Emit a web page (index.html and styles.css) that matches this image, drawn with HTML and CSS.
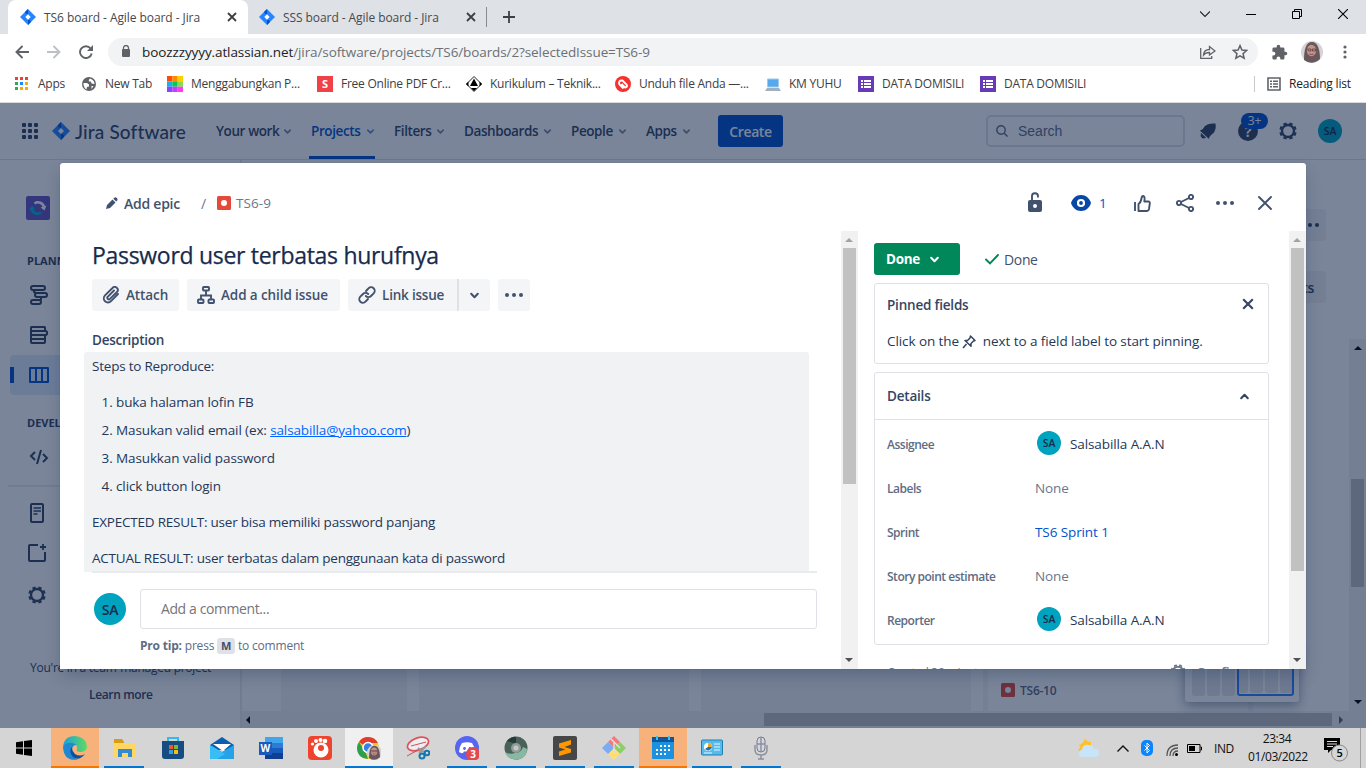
FILE: index.html
```html
<!DOCTYPE html>
<html lang="en">
<head>
<meta charset="utf-8">
<title>TS6 board - Agile board - Jira</title>
<link rel="stylesheet" href="styles.css">
</head>
<body>
<svg class="defs" width="0" height="0">
  <defs>
    <symbol id="jira" viewBox="0 0 16 16"><path fill="#2684ff" d="M8 0l8 8-8 8-8-8z"/><path fill="#0052cc" d="M8 0L5.2 2.8Q5 5 8 5.3zM8 16l2.8-2.8Q11 11 8 10.7z"/><path fill="#fff" d="M8 5.3L10.7 8 8 10.7 5.3 8z"/></symbol>
    <symbol id="close" viewBox="0 0 10 10"><path d="M1 1l8 8M9 1l-8 8" fill="none" stroke="currentColor" stroke-width="1.8"/></symbol>
    <symbol id="chev" viewBox="0 0 10 10"><path d="M2 3.5l3 3 3-3" fill="none" stroke="currentColor" stroke-width="1.9" stroke-linecap="round" stroke-linejoin="round"/></symbol>
    <symbol id="dots" viewBox="0 0 18 6"><circle cx="2" cy="3" r="2"/><circle cx="9" cy="3" r="2"/><circle cx="16" cy="3" r="2"/></symbol>
    <symbol id="gear" viewBox="0 0 18 18"><circle cx="9" cy="9" r="6" fill="none" stroke="currentColor" stroke-width="2.3"/><path stroke="currentColor" stroke-width="3.4" d="M6.4 2.8L5.7 1M11.600 2.800l.7-1.800M15.200 6.400l1.800-.7M15.200 11.600l1.800.7M11.600 15.200l.7 1.800M6.400 15.200l-.7 1.800M2.800 11.600L1 12.300M2.800 6.400L1 5.700"/></symbol>
    <symbol id="bug" viewBox="0 0 14 14"><rect width="14" height="14" rx="1.5" fill="#e5493a"/><circle cx="7" cy="7" r="3" fill="#fff"/></symbol>
    <symbol id="form" viewBox="0 0 16 16"><path fill="#673ab7" d="M0 0h16v16H0z"/><path fill="#fff" d="M3 4h2v2H3zM6 4h7v2H6zM3 7h2v2H3zM6 7h7v2H6zM3 10h2v2H3zM6 10h7v2H6z"/></symbol>
    <symbol id="face" viewBox="0 0 22 22"><circle cx="11" cy="11" r="11" fill="#d8d2d6"/><path fill="#66595c" d="M3 19C3 8 5 1 11 1s8 8 8 17q-8 7-16 1z"/><ellipse cx="10.5" cy="9.5" rx="4.6" ry="5.8" fill="#c4948b"/><path d="M6.500 8h3.500v2H7.500zM11.500 8h3v2h-3z" fill="none" stroke="#4a3038" stroke-width=".7"/><path d="M8.500 13q2 1 4 0" stroke="#a5324a" fill="none"/></symbol>
    <symbol id="up" viewBox="0 0 8 4"><path d="M0 4l4-4 4 4z"/></symbol>
    <symbol id="down" viewBox="0 0 8 4"><path d="M0 0l4 4 4-4z"/></symbol>
  </defs>
</svg>

<header class="tabs">
  <div class="tab active"><svg class="i16"><use href="#jira"/></svg><span>TS6 board - Agile board - Jira</span><svg class="x"><use href="#close"/></svg></div>
  <div class="tab second"><svg class="i16"><use href="#jira"/></svg><span>SSS board - Agile board - Jira</span><svg class="x"><use href="#close"/></svg></div>
  <svg class="newtab" viewBox="0 0 12 12"><path d="M6 0v12M0 6h12" stroke="#3c4043" stroke-width="1.8"/></svg>
  <div class="winctl">
    <svg viewBox="0 0 10 10"><path d="M0 2.500l5 5 5-5" fill="none" stroke="#222" stroke-width="1.100"/></svg>
    <svg viewBox="0 0 10 10"><path d="M0 5.500h10" stroke="#000"/></svg>
    <svg viewBox="0 0 10 10"><path d="M.5 2.500h7v7h-7zM2.500 2.500v-2h7v7h-2" fill="none" stroke="#000"/></svg>
    <svg viewBox="0 0 10 10"><path d="M0 0l10 10M10 0L0 10" stroke="#000" stroke-width="1.100"/></svg>
  </div>
</header>

<div class="toolbar">
  <svg class="nav" viewBox="0 0 14 14"><path d="M14 7H1.500M7.500 1l-6 6 6 6" fill="none" stroke="#5f6368" stroke-width="1.900"/></svg>
  <svg class="nav" viewBox="0 0 14 14"><path d="M0 7h12.500M6.500 1l6 6-6 6" fill="none" stroke="#bdc1c6" stroke-width="1.900"/></svg>
  <svg class="nav" viewBox="0 0 14 14"><path d="M11.600 3.500A5.900 5.900 0 1 0 12.700 8.500" fill="none" stroke="#5f6368" stroke-width="1.900"/><path d="M14 0v6H8z" fill="#5f6368"/></svg>
  <div class="omni">
    <svg class="lock" viewBox="0 0 10 12"><rect x="1" y="4" width="8" height="8" rx="1" fill="#5f6368"/><path d="M2.500 5V3a2.500 2.500 0 0 1 5 0v2" fill="none" stroke="#5f6368" stroke-width="1.300"/></svg>
    <span class="url"><b>boozzzyyyy.atlassian.net</b>/jira/software/projects/TS6/boards/2?selectedIssue=TS6-9</span>
    <svg class="share" viewBox="0 0 16 14"><path d="M.7 3v10.300h11V11M3.500 10c.3-4 3-5.500 6-5.500V1.500L15 6l-5.500 4V7.500C6.500 7.500 5 8 3.500 10z" fill="none" stroke="#5f6368" stroke-width="1.300"/></svg>
    <svg class="star" viewBox="0 0 24 24"><path d="M12 2.500l2.900 6.600 7.100.6-5.400 4.700 1.600 7L12 17.700l-6.200 3.700 1.600-7L2 9.700l7.100-.6z" fill="none" stroke="#5f6368" stroke-width="2.300"/></svg>
  </div>
  <svg class="puzzle" viewBox="0 0 24 24"><path fill="#5f6368" d="M20.500 11H19V7a2 2 0 0 0-2-2h-4V3.500a2.500 2.500 0 0 0-5 0V5H4a2 2 0 0 0-2 2v3.800h1.500a2.700 2.700 0 0 1 0 5.400H2V20a2 2 0 0 0 2 2h3.800v-1.500a2.700 2.700 0 0 1 5.400 0V22H17a2 2 0 0 0 2-2v-4h1.500a2.500 2.500 0 0 0 0-5z"/></svg>
  <svg class="face"><use href="#face"/></svg>
  <svg class="kebab" viewBox="0 0 4 14"><g fill="#5f6368"><circle cx="2" cy="2" r="1.600"/><circle cx="2" cy="7" r="1.600"/><circle cx="2" cy="12" r="1.600"/></g></svg>
</div>

<nav class="bookmarks">
  <div class="bm"><svg class="i13" viewBox="0 0 13 13"><path fill="#ea4335" d="M0 0h3v3H0zM5 0h3v3H5zM10 0h3v3h-3z"/><path fill="#34a853" d="M0 5h3v3H0zM0 10h3v3H0z"/><path fill="#1a8cff" d="M5 5h3v3H5z"/><path fill="#f9ab00" d="M10 5h3v3h-3zM5 10h3v3H5zM10 10h3v3h-3z"/></svg><span>Apps</span></div>
  <div class="bm"><svg class="i14" viewBox="0 0 14 14"><circle cx="7" cy="7" r="7" fill="#5f6368"/><path fill="#fff" d="M1.500 6l3.500 0 2 1.500 0 2-2 .5-.5 2.500Q2 11 1.500 8zM8 1.500Q6 3 7 4.500l2 0 .5 2 3 .5Q12.500 3 8 1.500zM9.500 9h2l-2 3z"/></svg><span>New Tab</span></div>
  <div class="bm"><svg class="i16" viewBox="0 0 16 16"><path fill="#ff4b0a" d="M0 0h5.300v5.300H0z"/><path fill="#ff8a00" d="M5.300 0h5.400v5.300H5.300z"/><path fill="#ffce00" d="M10.700 0H16v5.300h-5.300z"/><path fill="#14b0e8" d="M0 5.300h5.300v5.400H0z"/><path fill="#00c864" d="M5.300 5.300h5.400v5.400H5.300z"/><path fill="#81df49" d="M10.700 5.300H16v5.400h-5.300z"/><path fill="#8746ff" d="M0 10.700h5.300V16H0z"/><path fill="#c43cff" d="M5.300 10.700h5.400V16H5.300z"/><path fill="#ff3af3" d="M10.700 10.700H16V16h-5.300z"/></svg><span>Menggabungkan P...</span></div>
  <div class="bm"><b class="s-logo">S</b><span>Free Online PDF Cr...</span></div>
  <div class="bm"><svg class="i16" viewBox="0 0 16 16"><path d="M8 .5L15.500 8 8 15.500.5 8z" fill="#fff" stroke="#222"/><path d="M8 2.500l4 7.500H4zM0 8l2.500-2.500v5zM16 8l-2.500-2.500v5zM5 12h6l-3 3z"/></svg><span>Kurikulum – Teknik...</span></div>
  <div class="bm"><svg class="i16" viewBox="0 0 16 16"><circle cx="8" cy="8" r="8" fill="#f5302d"/><path d="M8.500 12.500L4.500 8.500Q3 5.500 6 4.500h1.500l4 4Q13 11 10 11.500L6.500 8" fill="none" stroke="#fff" stroke-width="1.900"/></svg><span>Unduh file Anda —...</span></div>
  <div class="bm"><svg class="i16" viewBox="0 0 16 16"><path fill="#56a9ec" stroke="#9dc9ee" d="M2.500 3h11v8h-11z"/><path fill="#9eb1c1" d="M2 12h12l2 3H0z"/></svg><span>KM YUHU</span></div>
  <div class="bm"><svg class="i16"><use href="#form"/></svg><span>DATA DOMISILI</span></div>
  <div class="bm"><svg class="i16"><use href="#form"/></svg><span>DATA DOMISILI</span></div>
  <div class="bm reading"><svg class="i14" viewBox="0 0 14 14"><path d="M1 1h12v12H1z" fill="none" stroke="#5f6368" stroke-width="1.600"/><path fill="#5f6368" d="M3 3.500h2v1.500H3zM6 3.500h5v1.500H6zM3 6.300h2v1.500H3zM6 6.300h5v1.500H6zM3 9h2v1.500H3zM6 9h5v1.500H6z"/></svg><span>Reading list</span></div>
</nav>

<main class="page">
  <div class="app">
    <div class="jbar">
      <svg class="grid" viewBox="0 0 16 16"><g fill="#344563"><rect width="4" height="4" rx="1"/><rect x="6" width="4" height="4" rx="1"/><rect x="12" width="4" height="4" rx="1"/><rect y="6" width="4" height="4" rx="1"/><rect x="6" y="6" width="4" height="4" rx="1"/><rect x="12" y="6" width="4" height="4" rx="1"/><rect y="12" width="4" height="4" rx="1"/><rect x="6" y="12" width="4" height="4" rx="1"/><rect x="12" y="12" width="4" height="4" rx="1"/></g></svg>
      <svg class="jlogo"><use href="#jira"/></svg><span class="brand">Jira Software</span>
      <div class="menu">
        <div><span>Your work</span><svg><use href="#chev"/></svg></div>
        <div class="on"><span>Projects</span><svg><use href="#chev"/></svg></div>
        <div><span>Filters</span><svg><use href="#chev"/></svg></div>
        <div><span>Dashboards</span><svg><use href="#chev"/></svg></div>
        <div><span>People</span><svg><use href="#chev"/></svg></div>
        <div><span>Apps</span><svg><use href="#chev"/></svg></div>
      </div>
      <button class="create">Create</button>
      <div class="search"><svg viewBox="0 0 12 12"><circle cx="5" cy="5" r="4.200" fill="none" stroke="#5e6c84" stroke-width="1.400"/><path d="M8 8l3.500 3.500" stroke="#5e6c84" stroke-width="1.400"/></svg><span>Search</span></div>
      <svg class="bell" viewBox="0 0 18 18"><path fill="#344563" d="M16.500 1.500Q9 .8 5.500 4.500 4 8 .8 8.500L10 17q0-3 4-5.500Q17.500 8 16.500 1.500zM2 11l5 4.600Q4 17.500 2.500 15.500 1 14 2 11z"/></svg>
      <div class="help"><span>?</span><em>3+</em></div>
      <svg class="jgear"><use href="#gear"/></svg>
      <span class="ava a24">SA</span>
    </div>
    <div class="work">
      <aside class="side">
        <svg class="proj" viewBox="0 0 24 24"><rect width="24" height="24" rx="2" fill="#6554c0"/><path d="M5.500 12.500a6 6 0 0 0 9.500 4" fill="none" stroke="#00b8d9" stroke-width="2.600"/><path d="M3 14l3-4 3.500 3.500z" fill="#00b8d9"/><path d="M8.500 7.500a6 6 0 0 1 9.500 4" fill="none" stroke="#fff" stroke-width="2.600"/><path d="M20.500 9.500l-2 5-4-3z" fill="#fff"/></svg>
        <h4>PLANNING</h4>
        <div class="si"><svg viewBox="0 0 20 20"><g fill="none" stroke="#344563" stroke-width="2"><rect x="2" y="1" width="14" height="4" rx="2"/><rect x="6" y="8" width="12" height="4" rx="2"/><rect x="2" y="15" width="10" height="4" rx="2"/><path d="M5 5v2l2 1M12 12v3"/></g></svg></div>
        <div class="si"><svg viewBox="0 0 20 20"><g fill="none" stroke="#344563" stroke-width="2"><path d="M16 6V2.500Q16 2 15.500 2h-13Q2 2 2 2.500V17q0 1 1 1h12q1 0 1-1v-7M2 6h15l1 1v2l-1 1H2M2 14h14"/></g></svg></div>
        <div class="si sel"><svg viewBox="0 0 20 20"><path d="M1 3h18v14H1zM7 3v14M13 3v14" fill="none" stroke="#0052cc" stroke-width="2" stroke-linejoin="round"/></svg></div>
        <h4 class="dev">DEVELOPMENT</h4>
        <div class="si code"><svg viewBox="0 0 20 20"><path d="M6 5L2 9l4 4M14 7l4 4-4 4M12 3L8 17" fill="none" stroke="#344563" stroke-width="2"/></svg></div>
        <hr>
        <div class="si low"><svg viewBox="0 0 20 20"><rect x="4" y="1" width="12" height="18" rx="1" fill="none" stroke="#344563" stroke-width="2"/><path d="M6.500 5h7.500M6.500 8h7.500M6.500 11h4" stroke="#344563" stroke-width="1.600"/></svg></div>
        <div class="si low"><svg viewBox="0 0 20 20"><path d="M11 2H3Q2 2 2 3v14q0 1 1 1h14q1 0 1-1V9" fill="none" stroke="#344563" stroke-width="2"/><path d="M16 1v6M13 4h6" stroke="#344563" stroke-width="1.800"/></svg></div>
        <div class="si low"><svg><use href="#gear"/></svg></div>
        <p class="tm">You're in a team-managed project</p>
        <p class="lm">Learn more</p>
      </aside>
      <section class="board">
        <div class="bbody">
          <div class="btns"><span><svg><use href="#dots"/></svg></span><span>Insights</span></div>
          <div class="cols"><i></i><i></i><i></i><i><u><svg><use href="#bug"/></svg>TS6-10</u></i></div>
          <div class="mini"><i></i><i></i><i></i><b><i></i><i></i><i></i><i></i></b></div>
          <div class="vbar"><svg><use href="#up"/></svg><i></i><svg><use href="#down"/></svg></div>
        </div>
        <div class="hbar"><svg viewBox="0 0 4 8"><path d="M4 0v8L0 4z"/></svg><i></i><svg class="dim" viewBox="0 0 4 8"><path d="M0 0v8l4-4z"/></svg></div>
      </section>
    </div>
  </div>
  <div class="blanket"></div>

  <div class="modal">
    <div class="mhead">
      <svg class="pencil" viewBox="0 0 12 12"><path d="M0 12l1-4 5.500-5.500 3 3L4 11zM7.300 1.700l1-1q1.200-1 2.500.3t.4 2.600l-1 1z"/></svg>
      <b class="epic">Add epic</b><span class="slash">/</span>
      <svg class="bug"><use href="#bug"/></svg><span class="key">TS6-9</span>
      <div class="acts">
        <svg class="a1" viewBox="0 0 14 20"><rect y="8" width="14" height="12" rx="2"/><circle cx="7" cy="14" r="2" fill="#fff"/><path d="M4 9V4.500a3 3 0 0 1 6-.5v1.500" fill="none" stroke="#42526e" stroke-width="1.900"/></svg>
        <svg class="a2" viewBox="0 0 20 16"><path d="M10 0c5 0 8.500 3.500 10 8-1.500 4.500-5 8-10 8S1.500 12.500 0 8C1.500 3.500 5 0 10 0z" fill="#0747a6"/><circle cx="10" cy="8" r="3" fill="none" stroke="#fff" stroke-width="2.200"/></svg>
        <span class="one">1</span>
        <svg class="a3" viewBox="0 0 17 17"><path d="M1 7v9M4.500 16V9c2-1 2.500-3 3-5.500C7.700 1 8.500 1 9.300 1c2 .5 1.500 3 1 5.500h4q1.700 0 1.500 2l-.8 5.500q-.4 2-2 2z" fill="none" stroke="#42526e" stroke-width="1.900" stroke-linejoin="round"/></svg>
        <svg class="a4" viewBox="0 0 18 18"><g fill="none" stroke="#42526e" stroke-width="1.900"><circle cx="3" cy="9" r="2.100"/><circle cx="15" cy="3" r="2.100"/><circle cx="15" cy="15" r="2.100"/><path d="M5 8l8-4M5 10l8 4"/></g></svg>
        <svg class="a5"><use href="#dots"/></svg>
        <svg class="a6" viewBox="0 0 14 14"><path d="M1 1l12 12M13 1L1 13" stroke="#42526e" stroke-width="1.900" stroke-linecap="round"/></svg>
      </div>
    </div>
    <div class="mbody">
      <section class="left">
        <div class="lmain">
          <h1>Password user terbatas hurufnya</h1>
          <div class="btnrow">
            <button class="b1"><svg viewBox="0 0 18 18"><path d="M16 8l-7 7.200a4 4 0 0 1-6-5.800L10.500 2a3 3 0 0 1 4.500 4L8 12.800a1.500 1.500 0 0 1-2.300-2L12 4.500" fill="none" stroke="#42526e" stroke-width="1.900" stroke-linecap="round"/></svg><span>Attach</span></button>
            <button class="b2"><svg viewBox="0 0 18 18"><g fill="none" stroke="#42526e" stroke-width="1.900"><rect x="6" y="1" width="6" height="3.500" rx=".8"/><rect x="1" y="13.500" width="5.500" height="3.500" rx=".8"/><rect x="11.500" y="13.500" width="5.500" height="3.500" rx=".8"/><path d="M9 5v4M4 13V9.500h10V13"/></g></svg><span>Add a child issue</span></button>
            <div class="split"><button class="b3"><svg viewBox="0 0 18 18"><path d="M8 5l2.500-2.700a3.500 3.500 0 0 1 5.200 5L13 10a3.500 3.500 0 0 1-5.200 0M10 13l-2.500 2.700a3.500 3.500 0 0 1-5.200-5L5 8a3.500 3.500 0 0 1 5.200 0" fill="none" stroke="#42526e" stroke-width="1.900" stroke-linecap="round"/></svg><span>Link issue</span></button><button class="sq"><svg class="c"><use href="#chev"/></svg></button></div>
            <button class="sq"><svg class="d"><use href="#dots"/></svg></button>
          </div>
          <h3>Description</h3>
          <div class="desc">
            <p>Steps to Reproduce:</p>
            <ol><li>buka halaman lofin FB</li><li>Masukan valid email (ex: <a>salsabilla@yahoo.com</a>)</li><li>Masukkan valid password</li><li>click button login</li></ol>
            <p>EXPECTED RESULT: user bisa memiliki password panjang</p>
            <p class="last">ACTUAL RESULT: user terbatas dalam penggunaan kata di password</p>
          </div>
          <div class="comment"><span class="ava a32">SA</span><div class="field">Add a comment...</div></div>
          <p class="tip"><b>Pro tip:</b> press <kbd>M</kbd> to comment</p>
        </div>
        <div class="sb"><svg class="u"><use href="#up"/></svg><i></i><svg><use href="#down"/></svg></div>
      </section>
      <section class="right">
        <div class="rmain">
          <div class="status"><button>Done<svg><use href="#chev"/></svg></button><svg class="ck" viewBox="0 0 14 11"><path d="M1 5.500L5 9.500 13 1" fill="none" stroke="#00875a" stroke-width="1.900" stroke-linecap="round"/></svg><span>Done</span></div>
          <div class="card pinned"><div class="ph"><span>Pinned fields</span><svg><use href="#close"/></svg></div>
            <p>Click on the <svg viewBox="0 0 14 14"><path d="M8.500 1l4.500 4.500-1.500.5L9 8.500v2.800L3 5.500h2.500L8 3zM4.500 9L1 13" fill="none" stroke="#344563" stroke-width="1.500" stroke-linejoin="round"/></svg> next to a field label to start pinning.</p></div>
          <div class="card details"><div class="dh"><span>Details</span><svg><use href="#chev"/></svg></div>
            <dl>
              <dt>Assignee</dt><dd class="who"><span class="ava a24">SA</span><span>Salsabilla A.A.N</span></dd>
              <dt>Labels</dt><dd class="none">None</dd>
              <dt>Sprint</dt><dd class="link">TS6 Sprint 1</dd>
              <dt>Story point estimate</dt><dd class="none">None</dd>
              <dt>Reporter</dt><dd class="who"><span class="ava a24">SA</span><span>Salsabilla A.A.N</span></dd>
            </dl></div>
          <div class="foot"><span class="cr">Created 36 minutes ago</span><svg><use href="#gear"/></svg><b>Configure</b></div>
        </div>
        <div class="sb long"><svg class="u"><use href="#up"/></svg><i></i><svg><use href="#down"/></svg></div>
      </section>
    </div>
  </div>
</main>

<footer class="taskbar">
  <div class="start"><svg viewBox="0 0 16 16"><path d="M0 2.200l7-1V7.600H0zM8 1.100L16 0v7.600H8zM0 8.400h7v6.400l-7-1zM8 8.400h8V16l-8-1.100z"/></svg></div>
  <div class="t hot"><svg viewBox="0 0 24 24"><defs><linearGradient id="eg" x1="0" x2="1"><stop stop-color="#1ba0dd"/><stop offset="1" stop-color="#5edb60"/></linearGradient></defs><path fill="url(#eg)" d="M0 11Q1 0 12 0q11 1 12 10 0 6-7 6-4 0-3-3 1-2-1-4Q6 6 0 11z"/><path fill="#1e88d2" d="M0 11q3-5 9-4 4 1 4.500 2-5 0-4.500 6 1 7 6 8.500Q1 26 0 11z"/><path fill="#0c4f9c" d="M9.500 10Q5 16 10 21q6 4.500 12-3-5 3-10 0-4-3-2.500-8z"/></svg></div>
  <div class="t run"><svg viewBox="0 0 24 24"><path fill="#d99b18" d="M2 3h8l2 3v4H2z"/><path fill="#ffd762" d="M2 7h21v14H2z"/><path fill="#348bd3" d="M6 21v-8h14v8h-4v-4h-6v4z"/></svg></div>
  <div class="t"><svg viewBox="0 0 24 24"><path d="M7 6V2h10v4" fill="none" stroke="#35baf0" stroke-width="2"/><path fill="#174c80" d="M1 5h22v15q0 3-3 3H4q-3 0-3-3z"/><path fill="#ee5738" d="M8 9h4v4H8z"/><path fill="#81b82e" d="M13 9h4v4h-4z"/><path fill="#2aa3ea" d="M8 14h4v4H8z"/><path fill="#fabd12" d="M13 14h4v4h-4z"/></svg></div>
  <div class="t"><svg viewBox="0 0 24 24"><path fill="#0c5fae" d="M12 1l12 8v5H0V9z"/><path fill="#fff" d="M3 8h18l-8 7z"/><path fill="#26a2e8" d="M0 9l12 7L24 9v14H0z"/><path fill="#39bdf5" d="M0 9l15 9-8 5H0z"/></svg></div>
  <div class="t"><svg viewBox="0 0 24 24"><path fill="#41a5ee" d="M6 1h18v6H6z"/><path fill="#2b7cd3" d="M6 7h18v5H6z"/><path fill="#185abd" d="M6 12h18v5H6z"/><path fill="#103f91" d="M6 17h18v6H6z"/><path fill="#185abd" d="M0 6h13v13H0z"/><text x="1.500" y="16" font-family="Open Sans,sans-serif" font-size="10" font-weight="700" fill="#fff">W</text></svg></div>
  <div class="t"><svg viewBox="0 0 24 24"><rect width="24" height="24" rx="4" fill="#ef432d"/><g fill="#fff"><circle cx="13" cy="14" r="7.500"/><circle cx="4.500" cy="8" r="1.600"/><circle cx="8" cy="5" r="2"/><circle cx="12.500" cy="4" r="2"/><circle cx="17" cy="5" r="2.300"/></g><circle cx="13" cy="12" r="3" fill="#ef432d"/></svg></div>
  <div class="t cur"><svg viewBox="0 0 24 24"><circle cx="11" cy="12" r="11" fill="#f7c62e"/><path fill="#e33b2e" d="M11 12L2 6q3-5 9-5 7 0 10 6h-10z"/><path fill="#2b9f4c" d="M2 6l6 9 3 8Q0 22 0 12q0-3 2-6z"/><circle cx="11" cy="11.500" r="5" fill="#377fe8" stroke="#fff" stroke-width="1.500"/><use href="#face" x="10" y="9" width="15" height="15"/></svg></div>
  <div class="t"><svg viewBox="0 0 24 24"><ellipse cx="12" cy="8" rx="11" ry="6" transform="rotate(-20 12 8)" fill="#eee" stroke="#de5260" stroke-width="1.700"/><path d="M5 10l15-4M12 14L1 20" stroke="#d54c5a" fill="none"/><path d="M13 17l7-7M18 16l-6-4" stroke="#999" stroke-width="1.800"/><g fill="none" stroke="#1477ae" stroke-width="2"><circle cx="16" cy="20" r="2.500"/><circle cx="21" cy="17" r="2.300"/></g></svg></div>
  <div class="t run"><svg viewBox="0 0 24 24"><circle cx="12" cy="12" r="12" fill="#5865f2"/><path fill="#fff" d="M7 7q5-1.500 10 0 3 4 3 9-2 1.500-4 1l-1-1.500H9L8 17q-2 .5-4-1 0-5 3-9z"/><circle cx="9.500" cy="12.500" r="1.400" fill="#5865f2"/><circle cx="15" cy="12.500" r="1.400" fill="#5865f2"/><circle cx="18" cy="18" r="7" fill="#e5484d"/><text x="15.300" y="21.500" font-family="Open Sans,sans-serif" font-size="10" font-weight="700" fill="#fff">3</text></svg></div>
  <div class="t run"><svg viewBox="0 0 24 24"><circle cx="12" cy="12" r="11.500" fill="#496158"/><path fill="#86b8a2" d="M1 16q5 3 10 1 6 0 8-6l4 2q0 10-11 10.500Q3 23 1 16z"/><path fill="#263b35" d="M3 5Q8 0 12 1v7z"/><circle cx="12" cy="12" r="5" fill="#929b98"/><circle cx="12" cy="12" r="2.500" fill="#c4c9c7"/></svg></div>
  <div class="t run"><svg viewBox="0 0 24 24"><rect width="24" height="24" rx="2" fill="#474747"/><path fill="#ff9800" d="M6 7.500L18 4v4.500L11.500 11 18 13v3.500L6 20v-4.500l6.500-2L6 11.500z"/></svg></div>
  <div class="t run"><svg viewBox="0 0 24 24"><path fill="#f27a7a" d="M12 0l6 6-6 6-6-6z"/><path fill="#8bcf65" d="M18 6l6 6-6 6-6-6z"/><path fill="#ffdf73" d="M12 12l6 6-6 6-6-6z"/><path fill="#7aabf5" d="M6 6l6 6-6 6-6-6z"/><path d="M9 3l9 9M12 6v12" fill="none" stroke="#dedede" stroke-width="1.500"/></svg></div>
  <div class="t hot"><svg viewBox="0 0 24 24"><rect x="1" y="1" width="22" height="22" rx="1" fill="#1b91df"/><path fill="#0e579b" d="M1 1h22v5H1z"/><path d="M6 0v4M18 0v4" stroke="#32c3f2" stroke-width="2"/><path d="M9 10h10M5 14h14M5 18h10" stroke="#fff" stroke-width="2" stroke-dasharray="2 2"/></svg></div>
  <div class="t run"><svg viewBox="0 0 24 24"><rect x="1.500" y="4" width="21" height="15" rx="1" fill="#56bbec" stroke="#227fad"/><circle cx="8" cy="11" r="4" fill="#fff"/><path fill="#f4a623" d="M8 11V7a4 4 0 0 1 4 4z"/><path fill="#2372b3" d="M8 11h4a4 4 0 0 1-7 2z"/><path d="M14 8h6M14 11h6M14 14h6M4 17h8" stroke="#e7f6ff"/></svg></div>
  <div class="t run"><svg viewBox="0 0 24 24"><rect x="8" y="1" width="8" height="15" rx="4" fill="#d5d7e0" stroke="#777b8c"/><path d="M12 1v15M8 8h8M6 9v5q0 5 6 5t6-5V9M12 19v4M9 23h6" fill="none" stroke="#8a8d9a" stroke-width="1.400"/></svg></div>
  <div class="tray">
    <svg class="wx" viewBox="0 0 24 20"><path fill="#ffc02e" d="M9 0q0 3 6 4v8l-9 2q-3 0-4-3 3-1 2-3L2 7q5 0 7-7z"/><path fill="#c7e4f8" d="M5 19a4 4 0 0 1 1-7.500q1-5.500 7-4.500 4 0 5 4 5-1 5 4 0 4-4 4z"/></svg>
    <svg class="tu" viewBox="0 0 12 7"><path d="M.5 6.500L6 1l5.500 5.500" fill="none" stroke="#111" stroke-width="1.400"/></svg>
    <svg class="bt" viewBox="0 0 12 16"><rect width="12" height="16" rx="5" fill="#0a84ff"/><path d="M3.500 5.500l5 5L6 13V3l2.500 2.500-5 5" fill="none" stroke="#fff"/></svg>
    <svg class="wifi" viewBox="0 0 12 12"><path d="M1 12Q1 1 12 1M4 12q0-8 8-8M7 12q0-5 5-5" fill="none" stroke="#555" stroke-width="1.300"/><circle cx="10.500" cy="10.500" r="1.500"/></svg>
    <svg class="bat" viewBox="0 0 15 9"><path d="M.5.500h12.500v8H.5zM13.500 3h1v3h-1" fill="none" stroke="#000"/><path d="M2 2h6v5H2z"/></svg>
    <span class="ind">IND</span>
    <span class="clock">23:34<br>01/03/2022</span>
    <svg class="note" viewBox="0 0 24 25"><path d="M0 1h16v12H7l-3 3v-3H0z"/><path d="M3 4.500h10M3 7h10M3 9.500h6" stroke="#ddd"/><circle cx="15.500" cy="16" r="8" fill="#d5d5d5" stroke="#888"/><text x="12.500" y="20" font-family="Open Sans,sans-serif" font-size="11" font-weight="600">5</text></svg>
    <i class="peek"></i>
  </div>
</footer>
</body>
</html>
```
FILE: styles.css
```css
* { box-sizing: border-box; margin: 0; padding: 0; }
body { width: 1366px; height: 768px; overflow: hidden; display: flex; flex-direction: column; font: 14px "Open Sans", "Noto Sans", sans-serif; letter-spacing: -.25px; color: #172b4d; background: #fff; }
svg { display: block; flex: none; }
button { font: inherit; letter-spacing: inherit; color: inherit; border: 0; }
span, b, h1, h3, h4, p { white-space: nowrap; }
.defs { position: absolute; }
.i16 { width: 16px; height: 16px; }
.i14 { width: 14px; height: 14px; }
.i13 { width: 13px; height: 13px; }

/* Browser chrome */
.tabs { height: 34px; background: #dee1e6; display: flex; align-items: center; font-size: 12px; letter-spacing: -.07px; color: #45494d; }
.tab { display: flex; align-items: center; height: 34px; }
.tab span { margin-left: 8px; width: 183px; }
.tab .x { width: 10px; height: 10px; color: #3c4043; }
.active { margin-left: 8px; width: 240px; padding-left: 12px; background: #fff; border-radius: 8px 8px 0 0; }
.second { width: 239px; padding-left: 11px; border-right: 1px solid #888c91; height: 20px; }
.newtab { width: 12px; height: 12px; margin-left: 16px; }
.winctl { margin-left: auto; display: flex; gap: 36px; padding-right: 18px; margin-top: -6px; }
.winctl svg { width: 10px; height: 10px; }
.toolbar { height: 38px; display: flex; align-items: center; padding-left: 15px; padding-bottom: 2px; }
.nav { width: 14px; height: 14px; margin-right: 18px; }
.omni { width: 1150px; height: 28px; margin-left: -3px; border-radius: 14px; background: #f1f3f4; display: flex; align-items: center; padding-left: 13px; }
.lock { width: 10px; height: 12px; margin-top: -2px; }
.url { margin-left: 11px; font-size: 13.500px; letter-spacing: -.1px; color: #6c7075; }
.url b { font-weight: 400; color: #202124; }
.share { width: 16px; height: 14px; margin-left: auto; }
.star { width: 16px; height: 16px; margin: 0 10px 0 16px; }
.puzzle { width: 17px; height: 17px; margin-left: 13px; }
.face { width: 22px; height: 22px; margin-left: 13px; }
.kebab { width: 4px; height: 14px; margin-left: 20px; }
.bookmarks { height: 31px; border-bottom: 1px solid #d9dbdf; padding: 0 15px 7px; display: grid; grid-template-columns: 67px 85px 150px 149px 149px 150px 93px 122px 122px 1fr; font-size: 12px; letter-spacing: -.25px; color: #3c4043; }
.bm { display: flex; align-items: center; }
.bm svg + span, .s-logo + span { margin-left: 8px; }
.bm:nth-child(1) span { margin-left: 10px; }
.bm:nth-child(2) span { margin-left: 9px; }
.s-logo { width: 16px; height: 16px; background: #ef4146; color: #fff; font-size: 11px; line-height: 16px; text-align: center; }
.reading { width: 98px; margin-left: 152px; border-left: 1px solid #c6c9ce; padding-left: 12px; height: 16px; align-self: center; letter-spacing: -.2px; }
.reading span { color: #202124; }

/* Jira page */
.page { position: relative; height: 625px; overflow: hidden; }
.app { height: 625px; display: flex; flex-direction: column; color: #344563; }
.blanket { position: absolute; inset: 0; background: rgba(9, 30, 66, .54); }
.jbar { height: 57px; border-bottom: 1px solid #dfe1e6; display: flex; align-items: center; padding-left: 22px; flex: none; }
.grid { width: 16px; height: 16px; }
.jlogo { width: 18px; height: 18px; margin-left: 14px; }
.brand { width: 141px; margin-left: 5px; font: 500 19px Lato, sans-serif; letter-spacing: .15px; color: #344563; }
.menu { display: grid; grid-template-columns: 95px 83px 70px 107px 75px 72px; height: 56px; font-weight: 600; font-size: 13.500px; letter-spacing: -.4px; }
.menu div { display: flex; align-items: center; justify-content: space-between; padding-right: 19px; }
.menu div:last-child { padding-right: 27px; }
.menu svg { width: 9px; height: 9px; opacity: .65; }
.menu .on { color: #0052cc; position: relative; }
.menu .on::after { content: ""; position: absolute; left: -2px; right: 19px; bottom: 0; height: 3px; background: #0052cc; }
.create { width: 65px; height: 32px; border-radius: 3px; background: #0052cc; color: #fff; font-weight: 600; letter-spacing: -.4px; }
.search { width: 199px; height: 32px; margin-left: 203px; border: 2px solid #dfe1e6; border-radius: 5px; display: flex; align-items: center; gap: 10px; padding-left: 8px; font-family: "Liberation Sans", sans-serif; letter-spacing: 0; color: #5e6c84; }
.search svg { width: 12px; height: 12px; }
.bell { width: 18px; height: 18px; margin-left: 14px; }
.help { position: relative; width: 20px; height: 20px; border-radius: 50%; background: #344563; color: #fff; margin-left: 21px; text-align: center; line-height: 22px; font-weight: 700; }
.help em { position: absolute; left: 3px; top: -8px; width: 27px; height: 16px; border-radius: 8px; background: #0052cc; font: 12px/16px "Open Sans", sans-serif; letter-spacing: 0; }
.jgear { width: 18px; height: 18px; margin: 0 21px 0 21px; }
.ava { display: inline-flex; align-items: center; justify-content: center; flex: none; border-radius: 50%; background: #00a3bf; color: #172b4d; font-weight: 600; }
.a24 { width: 24px; height: 24px; font-size: 10.500px; letter-spacing: 0; }
.a32 { width: 32px; height: 32px; font-size: 14px; font-weight: 600; }
.work { flex: 1; display: flex; min-height: 0; }
.side { width: 242px; border-right: 2px solid #ebecf0; padding-top: 36px; }
.proj { width: 24px; height: 24px; margin-left: 26px; }
.side h4 { font-size: 11px; line-height: 16px; margin: 33px 0 6px 27px; letter-spacing: 0; }
.side h4.dev { margin: 20px 0 6px 27px; }
.si { height: 40px; margin-left: 10px; margin-right: 12px; padding-left: 19px; display: flex; align-items: center; border-radius: 4px; }
.si svg { width: 20px; height: 20px; }
.si.sel { background: #deebff; position: relative; }
.sel::before { content: ""; position: absolute; left: 0; top: 12px; width: 4px; height: 16px; background: #0052cc; }
.side hr { border: 0; height: 2px; background: #ebecf0; margin: 8px 8px 6px; }
.si.low { padding-left: 17px; color: #344563; }
.si.low:nth-last-child(3) { padding-left: 18px; padding-top: 3px; }
.si.low:nth-last-child(3) svg { width: 18px; height: 18px; }
.tm { font-size: 12px; margin: 47px 0 0 30px; line-height: 16px; letter-spacing: -.26px; }
.lm { font-size: 12px; font-weight: 600; margin: 11px 0 0 89px; line-height: 16px; letter-spacing: -.35px; }
.board { width: 1124px; display: flex; flex-direction: column; }
.bbody { position: relative; flex: 1; display: flex; align-items: flex-end; }
.btns { position: absolute; right: 40px; top: 49px; display: flex; flex-direction: column; align-items: flex-end; gap: 30px; font-weight: 600; }
.btns span { height: 32px; min-width: 32px; padding: 0 12px; border-radius: 3px; background: #f1f2f5; display: flex; align-items: center; }
.btns svg { width: 18px; height: 6px; margin: 0 -5px; fill: #344563; }
.cols { display: flex; gap: 12px; height: 42px; padding-left: 39px; }
.cols > i { width: 270px; background: #f4f5f7; flex: none; font-style: normal; padding: 0 5px; }
.cols > i:first-child { width: 126px; }
.cols u { background: #fff; display: flex; height: 42px; align-items: center; gap: 5px; padding-left: 13px; text-decoration: none; font-size: 12px; color: #5e6c84; font-weight: 600; }
.cols svg { width: 14px; height: 14px; }
.mini { position: absolute; right: 67px; bottom: 9px; width: 114px; height: 60px; background: #fff; border-radius: 3px; box-shadow: 0 3px 12px rgba(9,30,66,.45); display: flex; gap: 2px; padding: 6px 5px 6px 7px; }
.mini i { width: 13px; flex: none; background: #e6e8ed; border-radius: 3px; }
.mini b { width: 57px; border: 2px solid #2684ff; border-radius: 3px; display: flex; gap: 2px; margin: -1px 0 0 auto; padding-bottom: 1px; overflow: hidden; }
.mini b i:first-child { width: 9px; }
.vbar { position: absolute; right: 0; bottom: 0; width: 17px; height: 372px; background: #f1f1f1; display: flex; flex-direction: column; align-items: center; justify-content: space-between; padding: 7px 0; }
.vbar svg, .sb svg { width: 8px; height: 4px; }
.vbar i { width: 13px; height: 108px; background: #c1c1c1; margin-top: 16px; }
.hbar { height: 17px; background: #f1f1f1; display: flex; align-items: center; justify-content: space-between; padding: 0 23px 0 4px; }
.hbar svg { width: 4px; height: 8px; }
.hbar .dim { opacity: .6; }
.hbar i { width: 568px; height: 13px; background: #c1c1c1; margin-left: 507px; }

/* Issue dialog */
.modal { position: absolute; left: 60px; top: 60px; width: 1246px; height: 506px; background: #fff; border-radius: 3px 3px 0 0; box-shadow: 0 0 1px rgba(9,30,66,.31), 0 8px 16px -2px rgba(9,30,66,.25); display: flex; flex-direction: column; overflow: hidden; }
.mhead { height: 68px; display: flex; align-items: center; padding: 12px 34px 0 46px; color: #42526e; fill: #42526e; }
.pencil { width: 12px; height: 12px; }
.epic { margin-left: 6px; width: 76px; font-weight: 600; }
.slash { margin-left: 1px; color: #6b778c; width: 16px; }
.bug { width: 14px; height: 14px; }
.key { margin-left: 5px; font-size: 13.500px; color: #6b778c; letter-spacing: .1px; }
.acts { margin-left: auto; display: flex; align-items: center; }
.a1 { width: 14px; height: 20px; margin-top: -3px; }
.a2 { width: 20px; height: 16px; margin-left: 29px; }
.one { width: 8px; margin-left: 8px; color: #0052cc; font-size: 13.500px; }
.a3 { width: 17px; height: 17px; margin-left: 27px; }
.a4 { width: 18px; height: 18px; margin-left: 25px; }
.a5 { width: 18px; height: 6px; margin-left: 22px; }
.a6 { width: 14px; height: 14px; margin-left: 24px; }
.mbody { flex: 1; display: flex; min-height: 0; }
.left { width: 798px; display: flex; }
.lmain { width: 781px; padding: 4px 24px 0; }
h1 { font-size: 23px; line-height: 40px; font-weight: 500; letter-spacing: -.3px; padding-left: 8px; -webkit-text-stroke: .25px #172b4d; }
.btnrow { display: flex; gap: 8px; margin: 4px 0 0 8px; color: #42526e; fill: #42526e; font-weight: 600; font-size: 13.500px; letter-spacing: -.1px; }
.btnrow button { height: 32px; background: #f4f5f7; border-radius: 3px; display: flex; align-items: center; padding-left: 10px; gap: 6px; }
.btnrow button svg { width: 18px; height: 18px; }
.btnrow .b1 { width: 87px; }
.btnrow .b2 { width: 153px; }
.btnrow .b3 { width: 111px; border-right: 2px solid #dfe1e6; border-radius: 3px 0 0 3px; letter-spacing: -.2px; }
.split { display: flex; }
.btnrow .sq { width: 32px; padding: 0; justify-content: center; }
.split .sq { width: 31px; }
.btnrow .sq .d { height: 6px; }
.btnrow .sq .c { width: 11px; height: 11px; }
h3 { font-size: 13.500px; font-weight: 600; line-height: 20px; margin: 19px 0 2px 8px; letter-spacing: -.25px; color: #344563; }
.desc { width: 725px; height: 220px; background: #f1f2f4; padding: 4px 8px 0; border-radius: 3px 3px 0 0; font-size: 13.500px; letter-spacing: -.22px; position: relative; color: #243757; }
.desc::after { content: ""; position: absolute; left: 8px; right: -8px; bottom: -1px; height: 2px; background: #e8eaee; }
.desc p { line-height: 20px; margin-bottom: 16px; }
.desc ol { list-style-position: outside; padding-left: 24px; margin-bottom: 16px; }
.desc li { height: 20px; line-height: 20px; margin-bottom: 8px; letter-spacing: -.12px; }
.desc a { color: #0065ff; text-decoration: underline; }
.comment { display: flex; align-items: center; margin: 17px 0 0 10px; }
.field { margin-left: 14px; width: 677px; height: 40px; border: 1px solid #dfe1e6; border-radius: 3px; padding-left: 20px; line-height: 38px; color: #75757a; letter-spacing: -.4px; }
.tip { margin: 8px 0 0 56px; font-size: 12px; line-height: 18px; color: #5e6c84; letter-spacing: -.2px; }
.tip b { font-weight: 700; }
kbd { display: inline-block; width: 18px; height: 16px; text-align: center; border-radius: 3px; background: #dfe1e6; font: 700 11px/16px "Open Sans", sans-serif; color: #42526e; }
.sb { width: 17px; background: #f1f1f1; display: flex; flex-direction: column; align-items: center; padding: 7px 1px 7px 0; fill: #505050; }
.sb .u { fill: #a3a3a3; }
.sb i { width: 13px; height: 236px; background: #c1c1c1; margin: 6px 0 auto 1px; }
.sb.long i { height: 323px; }
.right { width: 448px; display: flex; overflow: hidden; }
.rmain { width: 431px; padding: 12px 20px 0 16px; }
.status { display: flex; align-items: center; height: 32px; color: #42526e; letter-spacing: -.35px; }
.status button { width: 86px; height: 32px; background: #00875a; color: #fff; border-radius: 3px; font-weight: 700; font-size: 13.500px; display: flex; align-items: center; padding-left: 12px; gap: 9px; }
.status button svg { width: 11px; height: 11px; }
.ck { width: 14px; height: 11px; margin: 0 5px 0 25px; }
.card { border: 1px solid #dfe1e6; border-radius: 3px; margin-top: 8px; }
.pinned { height: 81px; padding: 11px 14px 0 12px; font-size: 13.500px; }
.ph, .dh { display: flex; justify-content: space-between; align-items: center; font-weight: 600; color: #344563; letter-spacing: -.2px; }
.ph { height: 20px; }
.ph svg { width: 12px; height: 12px; margin-top: -2px; color: #344563; }
.pinned p { margin-top: 16px; line-height: 20px; letter-spacing: -.08px; color: #243757; }
.pinned p svg { display: inline-block; width: 14px; height: 14px; vertical-align: -3px; margin-right: 3px; }
.details { height: 273px; }
.dh { height: 47px; padding: 0 18px 0 12px; border-bottom: 1px solid #dfe1e6; font-size: 13.500px; }
.dh svg { width: 11px; height: 11px; transform: rotate(180deg); }
dl { display: grid; grid-template-columns: 148px 1fr; grid-auto-rows: 44px; align-items: center; padding: 2px 0 0 12px; }
dt { font-size: 12px; font-weight: 600; color: #5e6c84; letter-spacing: -.48px; }
dd { letter-spacing: -.1px; font-size: 13.500px; color: #243757; }
.who { display: flex; align-items: center; gap: 9px; padding-left: 2px; }
.who .ava { margin-top: -2px; }
.none { color: #6b778c; }
.link { color: #0052cc; }
.foot { display: flex; align-items: center; height: 20px; margin: 17px 0 0 13px; color: #6b778c; font-size: 12px; letter-spacing: -.4px; }
.cr { width: 283px; }
.foot svg { width: 16px; height: 16px; margin-right: 10px; }
.foot b { font-size: 14px; font-weight: 600; }

/* Windows taskbar */
.taskbar { height: 40px; background: #d5d5d5; display: flex; gap: 1px; }
.start { width: 50px; display: flex; align-items: center; justify-content: center; padding-right: 2px; }
.start svg { width: 16px; height: 16px; }
.t { width: 48px; height: 40px; display: flex; align-items: center; justify-content: center; position: relative; }
.t svg { width: 24px; height: 24px; }
.run::after, .cur::after, .hot::after { content: ""; position: absolute; left: 4px; right: 4px; bottom: 0; height: 2px; background: #0078d4; }
.hot { background: #f7b27c; }
.hot::after { left: 0; right: 0; background: #f77500; }
.cur { background: #f0f0f0; }
.cur::after { left: 0; right: 0; }
.tray { flex: 1; display: flex; align-items: center; padding-left: 290px; font-size: 12px; letter-spacing: -.4px; color: #111; }
.wx { width: 24px; height: 20px; }
.tu { width: 12px; height: 7px; margin-left: 17px; }
.bt { width: 12px; height: 16px; margin-left: 12px; }
.wifi { width: 12px; height: 12px; margin: 3px 0 0 13px; }
.bat { width: 15px; height: 9px; margin-left: 9px; }
.ind { margin-left: 12px; width: 20px; }
.clock { margin-left: 14px; width: 58px; text-align: center; line-height: 18px; }
.note { width: 24px; height: 25px; margin: 3px 0 0 18px; }
.peek { width: 1px; height: 40px; background: #a0a0a0; margin-left: 12px; }
```
